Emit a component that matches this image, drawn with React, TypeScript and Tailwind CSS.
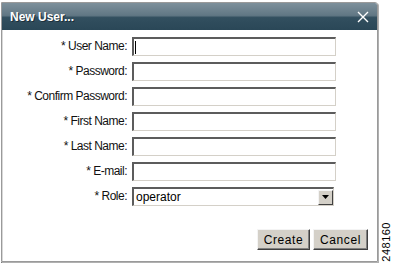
import React from "react";

const fields = [
  "* User Name:",
  "* Password:",
  "* Confirm Password:",
  "* First Name:",
  "* Last Name:",
  "* E-mail:",
];

const inputCls =
  "h-[19px] w-[204px] bg-white border-t-2 border-l-2 border-r border-b border-t-[#5c5c5c] border-l-[#5c5c5c] border-r-[#d4d0c8] border-b-[#d4d0c8]";

const labelCls = "text-right text-[12px] tracking-[-0.5px] leading-[19px] text-[#111]";

const btnCls =
  "h-[21px] bg-[#d4d0c8] border border-t-[#f4f4f4] border-l-[#f4f4f4] border-r-[#404040] border-b-[#404040] shadow-[inset_-1px_-1px_0_#808080] text-[12px] tracking-[0.6px] text-black flex items-center justify-center";

export default function App() {
  return (
    <div
      className="w-[394px] h-[265px] bg-white flex overflow-hidden"
      style={{ fontFamily: '"Liberation Sans", Arial, sans-serif' }}
    >
      <div className="mt-[2px] ml-[1px] w-[377px] h-[260px] border border-[#9a9a9a] rounded-tr-[3px] shadow-[1px_1px_0_#b0b0b0,0_1px_0_#7a7a7a] flex flex-col">
        <div className="h-[27px] flex items-center justify-between pl-[8px] pr-[8px] bg-[linear-gradient(to_bottom,#7d909b_0%,#617784_46%,#324f5f_54%,#2a4757_100%)] rounded-tr-[2px]">
          <span className="text-white font-bold text-[12px] [text-shadow:1px_1px_0_#1c2f3a]">
            New User...
          </span>
          <svg width="12" height="12" viewBox="0 0 12 12" className="mt-[1px]">
            <path d="M1 1 L11 11 M11 1 L1 11" stroke="#ffffff" strokeWidth="1.4" />
          </svg>
        </div>
        <div className="flex-1 flex flex-col border-l border-[#d8d8d8] bg-white">
          <div className="pt-[7px] pl-[1px] grid grid-cols-[123px_204px] gap-x-[5px] gap-y-[6px]">
            {fields.map((f, i) => (
              <React.Fragment key={f}>
                <div className={labelCls}>{f}</div>
                <div className={inputCls + " relative flex items-center"}>
                  {i === 0 && <div className="ml-[1px] w-[1px] h-[13px] bg-black" />}
                </div>
              </React.Fragment>
            ))}
            <div className={labelCls}>* Role:</div>
            <div className="h-[19px] w-[202px] bg-white border-t-2 border-l-2 border-r border-b border-t-[#5c5c5c] border-l-[#5c5c5c] border-r-[#d4d0c8] border-b-[#d4d0c8] flex items-center">
              <span className="flex-1 pl-[2px] text-[12px] leading-[15px] text-black">operator</span>
              <div className="w-[15px] h-[15px] bg-[#d4d0c8] border border-t-[#f4f4f4] border-l-[#f4f4f4] border-r-[#404040] border-b-[#404040] flex items-center justify-center">
                <svg width="7" height="4" viewBox="0 0 7 4">
                  <path d="M0 0 H7 L3.5 4 Z" fill="#000" />
                </svg>
              </div>
            </div>
          </div>
          <div className="mt-[23px] flex justify-end gap-[3px] pr-[9px]">
            <div className={btnCls + " w-[53px]"}>Create</div>
            <div className={btnCls + " w-[55px]"}>Cancel</div>
          </div>
        </div>
      </div>
      <div className="flex-1 flex items-end justify-center pb-[3px]">
        <span className="[writing-mode:vertical-rl] rotate-180 text-[11px] leading-[12px] text-black tracking-[0.5px]">
          248160
        </span>
      </div>
    </div>
  );
}
